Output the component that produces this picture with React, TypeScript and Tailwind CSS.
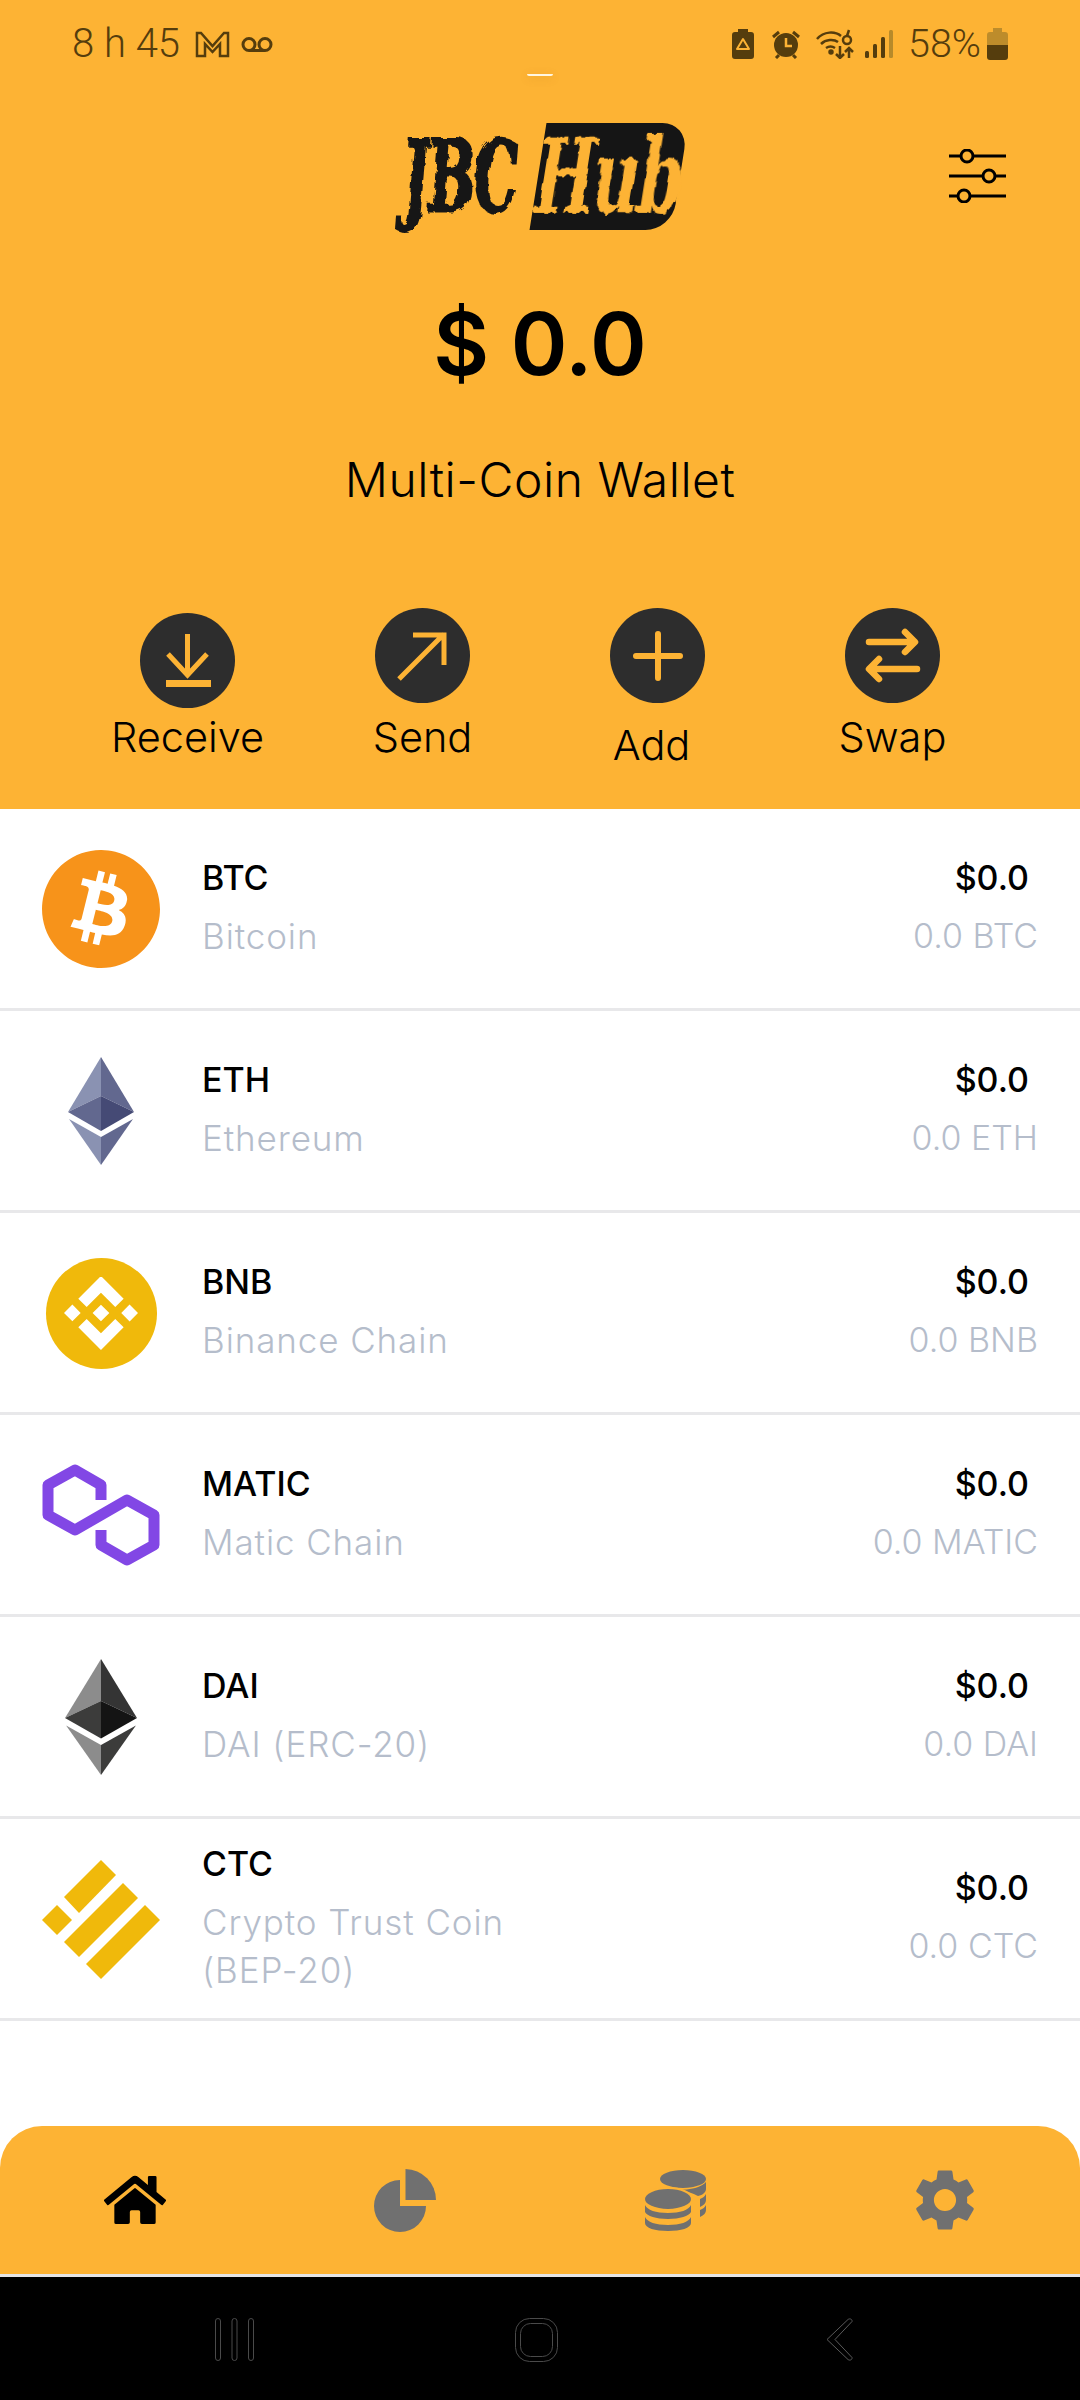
import React from "react";
import { FaHome } from "react-icons/fa";
import { MdSettings } from "react-icons/md";
import { SiBitcoin, SiBinance } from "react-icons/si";

const ORANGE = "#fdb334";

function EthIcon({ c, w, h }: { c: string[]; w: number; h: number }) {
  return (
    <svg width={w} height={h} viewBox="0 0 66 108" preserveAspectRatio="none">
      <polygon points="33,0 0,55 33,39" fill={c[0]} />
      <polygon points="33,0 66,55 33,39" fill={c[1]} />
      <polygon points="0,55 33,39 33,74" fill={c[2]} />
      <polygon points="66,55 33,39 33,74" fill={c[3]} />
      <polygon points="1,62 33,80 33,108" fill={c[4]} />
      <polygon points="65,62 33,80 33,108" fill={c[5]} />
    </svg>
  );
}

function MaticIcon() {
  return (
    <svg width="118" height="104" viewBox="0 0 118 104" fill="none">
      <path
        d="M59 37V22L33 7 6 22v30l27 15 52-30 27 15v30L85 97 59 82V67"
        stroke="#8247e5"
        strokeWidth="11"
        strokeLinejoin="round"
      />
    </svg>
  );
}

function CtcIcon() {
  return (
    <svg width="118" height="119" viewBox="0 0 118 119" fill="#f0b90b">
      <polygon points="59,0 74,15 37,53 22,37" />
      <polygon points="81,23 96,38 37,97 22,82" />
      <polygon points="103,45 118,60 59,119 44,104" />
      <polygon points="15,45 30,60 15,75 0,60" />
    </svg>
  );
}

const coins = [
  {
    symbol: "BTC",
    name: ["Bitcoin"],
    amount: "0.0 BTC",
    icon: (
      <div className="w-[118px] h-[118px] rounded-full bg-white flex items-center justify-center">
        <SiBitcoin size={118} color="#f7931a" />
      </div>
    ),
  },
  {
    symbol: "ETH",
    name: ["Ethereum"],
    amount: "0.0 ETH",
    icon: <EthIcon w={66} h={108} c={["#8a92b2", "#62688f", "#62688f", "#454a75", "#8a92b2", "#62688f"]} />,
  },
  {
    symbol: "BNB",
    name: ["Binance Chain"],
    amount: "0.0 BNB",
    icon: (
      <div className="w-[111px] h-[111px] rounded-full bg-[#f0b90b] flex items-center justify-center">
        <SiBinance size={74} color="#ffffff" />
      </div>
    ),
  },
  { symbol: "MATIC", name: ["Matic Chain"], amount: "0.0 MATIC", icon: <MaticIcon /> },
  {
    symbol: "DAI",
    name: ["DAI (ERC-20)"],
    amount: "0.0 DAI",
    icon: <EthIcon w={72} h={116} c={["#8c8c8c", "#343434", "#3c3c3b", "#141414", "#8c8c8c", "#3c3c3b"]} />,
  },
  { symbol: "CTC", name: ["Crypto Trust Coin", "(BEP-20)"], amount: "0.0 CTC", icon: <CtcIcon /> },
];

function ActionCircle({ children, className }: { children: React.ReactNode; className?: string }) {
  return (
    <div className={`w-[95px] h-[95px] rounded-full bg-[#2d2d2d] ${className ?? ""}`}>
      <svg width="95" height="95" viewBox="0 0 95 95" fill="none" stroke={ORANGE} strokeWidth="5">
        {children}
      </svg>
    </div>
  );
}

function StatusBar() {
  return (
    <div className="h-[88px] pl-[72px] pr-[72px] flex items-center justify-between text-[#553d0d] font-['Roboto',sans-serif] text-[40px] font-light">
      <div className="flex items-center">
        <span className="leading-none">8 h 45</span>
        <svg className="ml-[15px]" width="35" height="27" viewBox="0 0 35 27" fill="none" stroke="#553d0d" strokeWidth="2.5">
          <path d="M2 25V2h4l11.500 13L29 2h4v23h-8V13l-7.500 8L10 13v12z" />
        </svg>
        <svg className="ml-[10px]" width="34" height="15" viewBox="0 0 34 15" fill="none" stroke="#553d0d" strokeWidth="3">
          <circle cx="9" cy="7.500" r="6" />
          <circle cx="25" cy="7.500" r="6" />
          <path d="M9 13.500h16" />
        </svg>
      </div>
      <div className="flex items-center">
        <svg width="22" height="30" viewBox="0 0 22 30">
          <path d="M6 0h10v3h3a3 3 0 0 1 3 3v21a3 3 0 0 1-3 3H3a3 3 0 0 1-3-3V6a3 3 0 0 1 3-3h3z" fill="#553d0d" />
          <path d="M11 10l6 10H5z" stroke={ORANGE} strokeWidth="2" fill="none" strokeLinejoin="round" />
        </svg>
        <svg className="ml-[17px]" width="30" height="29" viewBox="0 0 30 29">
          <circle cx="15" cy="15" r="12" fill="#553d0d" />
          <path d="M15 8v8h6" stroke={ORANGE} strokeWidth="2.500" fill="none" />
          <path d="M2 7l6-5M28 7l-6-5M5 28l3-3M25 28l-3-3" stroke="#553d0d" strokeWidth="3" />
        </svg>
        <svg className="ml-[15px]" width="39" height="30" viewBox="0 0 39 30" fill="none" stroke="#553d0d" strokeWidth="2.500">
          <path d="M1 10c7-8 18-8 24-3M5 15c5-5 13-5 17-2M10 19c3-2 6-2 9 0" />
          <circle cx="15" cy="23" r="1.500" fill="#553d0d" />
          <circle cx="31" cy="11" r="4" />
          <path d="M31 7l2-6M24 17v12M20 25l4 4 4-4M33 29V19M29 23l4-4 4 4" />
        </svg>
        <svg className="ml-[10px]" width="28" height="28" viewBox="0 0 28 28" fill="#553d0d">
          <rect x="0" y="21" width="4" height="7" rx="1.500" />
          <rect x="8" y="14" width="4" height="14" rx="1.500" />
          <rect x="16" y="7" width="4" height="21" rx="1.500" />
          <rect x="24" y="0" width="4" height="28" rx="1.500" fill="#b78a2a" />
        </svg>
        <span className="ml-[15px] leading-none text-[39.500px]">58%</span>
        <svg className="ml-[6px]" width="21" height="32" viewBox="0 0 21 32">
          <path d="M6 0h9v4h3a3 3 0 0 1 3 3v10H0V7a3 3 0 0 1 3-3h3z" fill="#bd8c2b" />
          <path d="M0 17h21v12a3 3 0 0 1-3 3H3a3 3 0 0 1-3-3z" fill="#553d0d" />
        </svg>
      </div>
    </div>
  );
}

function Logo() {
  return (
    <div className="flex items-center w-[288px] h-[107px] text-[#151515] font-['DejaVu_Serif',serif] font-bold">
      {/* roughens the real text the way the distressed logo face looks */}
      <svg width="0" height="0" className="absolute">
        <filter id="rough" x="-10%" y="-10%" width="120%" height="120%">
          <feTurbulence type="fractalNoise" baseFrequency="0.09" numOctaves="2" seed="4" />
          <feDisplacementMap in="SourceGraphic" scale="7" />
        </filter>
      </svg>
      <div className="w-[132px] h-[107px] pl-[6px] flex items-center justify-start overflow-visible [filter:url(#rough)]">
        <span className="text-[98px] leading-none tracking-[-3px] origin-left scale-x-[0.56] -skew-x-[8deg] whitespace-nowrap [-webkit-text-stroke:3px_#151515]">
          JBC
        </span>
      </div>
      <div className="ml-[8px] w-[142px] h-[107px] bg-[#151515] rounded-r-[26px] -skew-x-[9deg] flex items-center justify-center">
        <span className="text-[104px] leading-none tracking-[-3px] scale-x-[0.62] whitespace-nowrap [filter:url(#rough)]" style={{ color: ORANGE }}>
          Hub
        </span>
      </div>
    </div>
  );
}

export default function App() {
  return (
    <div className="relative w-[1080px] h-[2400px] flex flex-col bg-white font-['Inter',sans-serif] overflow-hidden">
      {/* Header */}
      <div className="h-[809px] bg-[#fdb334]">
        <StatusBar />
        <div className="relative mt-[35px] flex justify-center pl-[4px]">
          <Logo />
          <svg className="absolute left-[949px] top-[26px]" width="57" height="54" viewBox="0 0 57 54" fill="none" stroke="#000" strokeWidth="3">
            <path d="M0 7h12M25 7h32M0 27h34M47 27h10M0 47h9M22 47h35" />
            <circle cx="18" cy="7" r="6" />
            <circle cx="40" cy="27" r="6" />
            <circle cx="15" cy="47" r="6" />
          </svg>
        </div>

        <div className="mt-[64px] text-center text-black font-semibold text-[86px] leading-[100px]">$ 0.0</div>
        <div className="mt-[56px] text-center text-black font-light text-[48px] tracking-[0.5px] leading-[60px]">Multi-Coin Wallet</div>

        {/* Actions */}
        <div className="mt-[98px] pl-[70px] grid grid-cols-[235px_235px_235px_235px] text-black font-light text-[41.500px] leading-[50px] text-center">
          <div className="flex flex-col items-center">
            <ActionCircle className="mt-[5px]">
              <path d="M47.500 21v41M28 41l19.500 21L67 41" />
              <rect x="26" y="67" width="45" height="7" fill={ORANGE} stroke="none" />
            </ActionCircle>
            <span className="mt-[4px]">Receive</span>
          </div>
          <div className="flex flex-col items-center">
            <ActionCircle>
              <path d="M24 71L69 26M38 27h31v30" />
            </ActionCircle>
            <span className="mt-[9px]">Send</span>
          </div>
          <div className="flex flex-col items-center">
            <ActionCircle>
              <path d="M26 48h44M48 26v44" strokeLinecap="round" strokeWidth="6" />
            </ActionCircle>
            <span className="mt-[17px] -ml-[12px]">Add</span>
          </div>
          <div className="flex flex-col items-center">
            <ActionCircle>
              <path d="M24 34h44M60 24l10 10-10 10M72 61H26M34 51L24 61l10 10" strokeWidth="6.500" strokeLinecap="round" strokeLinejoin="round" />
            </ActionCircle>
            <span className="mt-[9px]">Swap</span>
          </div>
        </div>
      </div>

      {/* Glow from the camera cut-out */}
      <div className="absolute left-[527px] top-[74px] w-[26px] h-[2px] rounded-b-full bg-[#fff6e0] shadow-[0_2px_8px_rgba(150,100,0,0.25)]" />

      {/* Coin list */}
      <div className="flex-1">
        {coins.map((coin) => (
          <div key={coin.symbol} className="h-[202px] border-b-[3px] border-[#e8e8ea] flex items-center">
            <div className="ml-[42px] w-[118px] pt-[1px] flex items-center justify-center">{coin.icon}</div>
            <div className="ml-[42px] flex-1 -mt-[3px]">
              <div className="text-[34px] leading-[48px] font-medium text-black">{coin.symbol}</div>
              <div className="mt-[10px] text-[35px] tracking-[0.9px] leading-[48px] font-light text-[#b5bdcb]">
                {coin.name.map((line) => (
                  <div key={line}>{line}</div>
                ))}
              </div>
            </div>
            <div className="mr-[42px] -mt-[3px] text-right">
              <div className="mr-[9px] text-[34px] leading-[48px] font-medium text-black">$0.0</div>
              <div className="mt-[10px] text-[34px] leading-[48px] font-light text-[#b5bdcb]">{coin.amount}</div>
            </div>
          </div>
        ))}
      </div>

      {/* Bottom nav */}
      <div className="h-[148px] bg-[#fdb334] rounded-t-[42px] grid grid-cols-4 items-center">
        <div className="flex justify-center">
          <FaHome size={62} color="#000" />
        </div>
        <div className="flex justify-center">
          <svg width="62" height="63" viewBox="0 0 62 63" fill="#707070">
            <path d="M26 11A26 26 0 1 0 52 37H26Z" />
            <path d="M31.500 0A31 31 0 0 1 62 31H31.500Z" />
          </svg>
        </div>
        <div className="flex justify-center">
          <svg width="61" height="61" viewBox="0 0 61 61" fill="#707070">
            <ellipse cx="38" cy="9" rx="23" ry="9" />
            <path d="M32 20c14 0 25-3 29-8v7c0 3-3 6-8 7-5-3-12-5-21-6zM55 29c3-1 5-3 6-5v6c0 3-2 5-6 7zM55 40c3-1 5-3 6-5v5c0 3-2 5-6 7z" />
            <ellipse cx="23" cy="29" rx="24" ry="11" stroke={ORANGE} strokeWidth="2" />
            <path d="M0 35c2 5 11 8 23 8s21-3 23-8v7c-2 4-11 7-23 7S2 46 0 42zM0 47c2 5 11 8 23 8s21-3 23-8v6c0 5-10 8-23 8S0 58 0 53z" />
          </svg>
        </div>
        <div className="flex justify-center">
          <MdSettings size={74} color="#707070" />
        </div>
      </div>
      <div className="h-[3px] bg-[#e6e6e6]" />

      {/* Android nav */}
      <div className="h-[123px] bg-black grid grid-cols-[215px_39px_261px_43px_268px_27px] pt-[41px]">
        <div />
        <svg width="39" height="43" viewBox="0 0 39 43" fill="none" stroke="#4a4a4a" strokeWidth="1">
          <rect x="0.500" y="0.500" width="5" height="42" rx="2.500" />
          <rect x="17" y="0.500" width="5" height="42" rx="2.500" />
          <rect x="33.500" y="0.500" width="5" height="42" rx="2.500" />
        </svg>
        <div />
        <svg width="43" height="44" viewBox="0 0 43 44" fill="none" stroke="#4a4a4a" strokeWidth="1">
          <rect x="0.500" y="0.500" width="42" height="43" rx="14" />
          <rect x="5.500" y="5.500" width="32" height="33" rx="10" />
        </svg>
        <div />
        <svg width="27" height="43" viewBox="0 0 27 43" fill="none" stroke="#5a5a5a" strokeWidth="1">
          <path d="M22 1.500c2-1.500 4.500 0 4 2L9 21.500l17 18c.5 2-2 3.500-4 2L1 21.500z" />
        </svg>
      </div>
    </div>
  );
}
